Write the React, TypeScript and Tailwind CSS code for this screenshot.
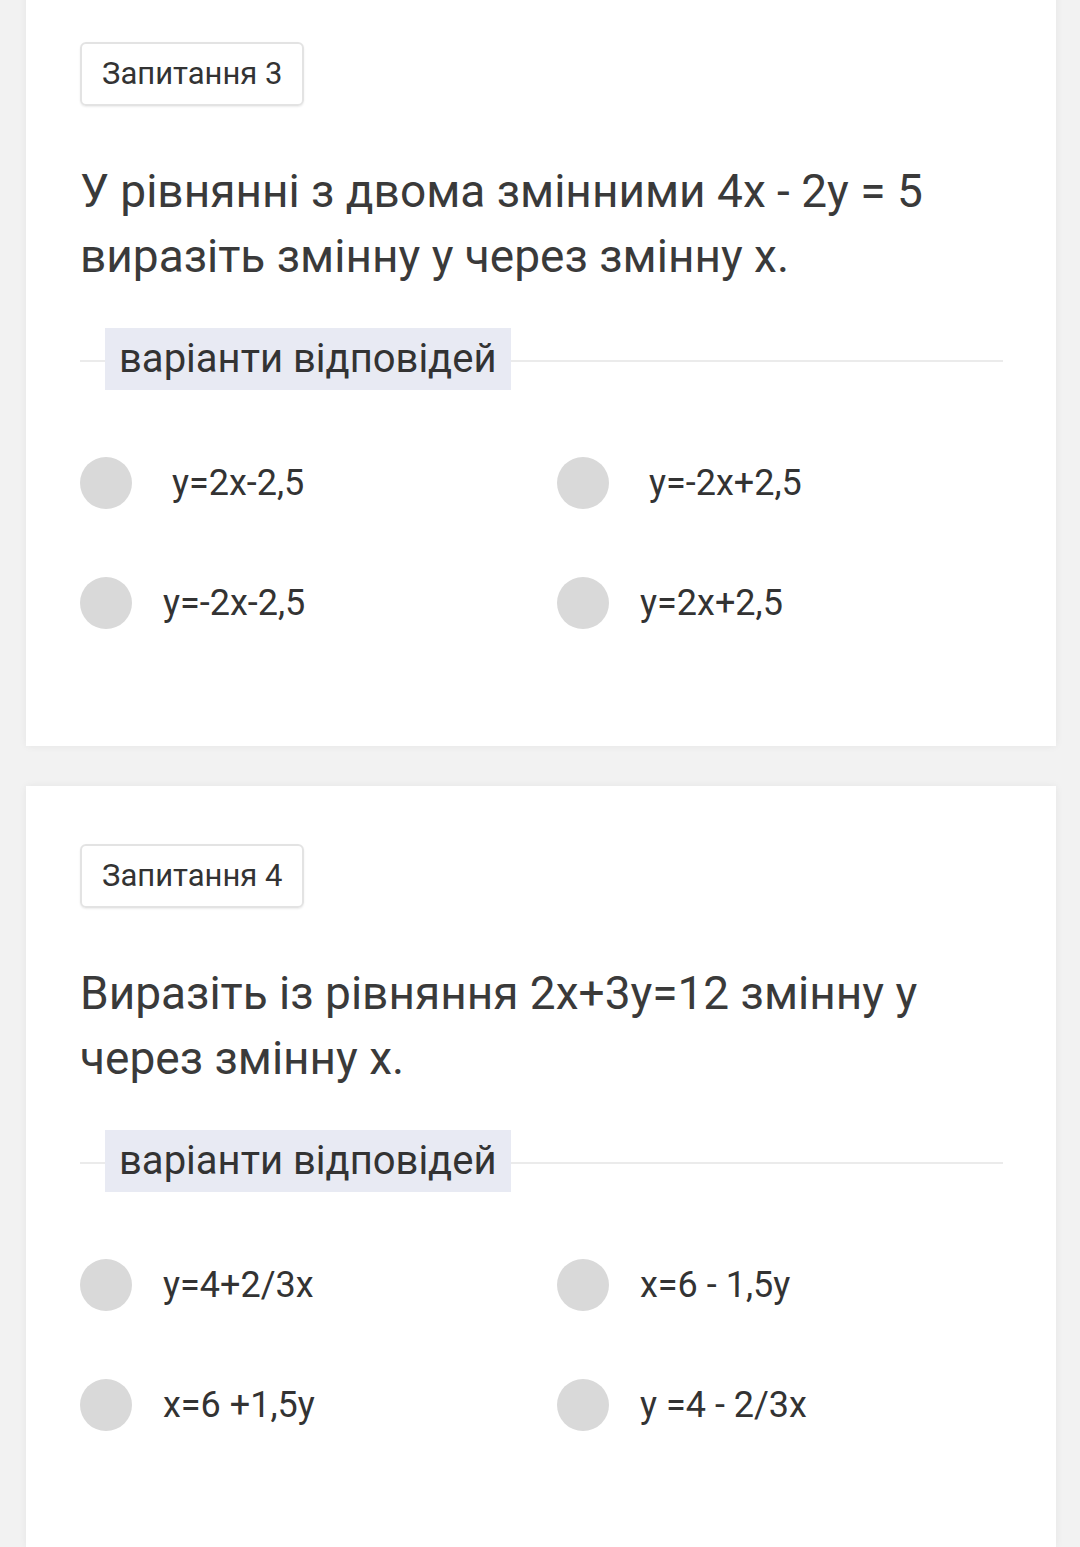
import React from 'react';

// ─── Data ─────────────────────────────────────────────────────────────────────
interface Question {
    number: number;
    text: string;
    options: string[];
}

const questions: Question[] = [
    {
        number: 3,
        text: 'У рівнянні з двома змінними 4x - 2y = 5 виразіть змінну y через змінну x.',
        options: [' y=2x-2,5', ' y=-2x+2,5', 'y=-2x-2,5', 'y=2x+2,5'],
    },
    {
        number: 4,
        text: 'Виразіть із рівняння 2x+3y=12 змінну y через змінну x.',
        options: ['y=4+2/3x', 'x=6 - 1,5y', 'x=6 +1,5y', 'y =4 - 2/3x'],
    },
];

function QuestionCard({ q }: { q: Question }) {
    return (
        <div className="bg-white w-[1030px] ml-[26px] pt-[58px] pb-[117px] pl-[54px] pr-[53px] shadow-[0_0_8px_rgba(0,0,0,0.06)]">
            {/* Badge */}
            <div className="inline-flex items-center h-[64px] px-[20px] border-2 border-[#e3e3e3] rounded-[6px] shadow-[0_1px_2px_rgba(0,0,0,0.08)] text-[31px] text-[#333]">
                Запитання {q.number}
            </div>

            {/* Question */}
            <p className="mt-[53px] text-[46px] leading-[65px] text-[#3a3a3a] pr-[40px]">{q.text}</p>

            {/* Divider */}
            <div className="relative mt-[39px] h-[62px] flex items-center">
                <div className="absolute left-0 right-0 top-[32px] h-[2px] bg-[#ebebeb]" />
                <div className="relative ml-[25px] h-[62px] px-[14px] flex items-center bg-[#e8eaf3] text-[40px] text-[#333]">
                    варіанти відповідей
                </div>
            </div>

            {/* Options */}
            <div className="mt-[67px] grid grid-cols-[477px_1fr] gap-y-[68px]">
                {q.options.map((o, i) => (
                    <div key={i} className="flex items-center gap-[31px] h-[52px]">
                        <div className="w-[52px] h-[52px] rounded-full bg-[#d9d9d9] shrink-0" />
                        <span className="text-[36px] leading-[52px] text-[#333] whitespace-pre">{o}</span>
                    </div>
                ))}
            </div>
        </div>
    );
}

export default function App() {
    return (
        <div className="min-h-screen bg-[#f2f2f2] overflow-hidden" style={{ fontFamily: 'Roboto, "Noto Sans", sans-serif' }}>
            <div className="-mt-[16px] flex flex-col gap-[40px]">
                {questions.map((q) => (
                    <QuestionCard key={q.number} q={q} />
                ))}
            </div>
        </div>
    );
}
